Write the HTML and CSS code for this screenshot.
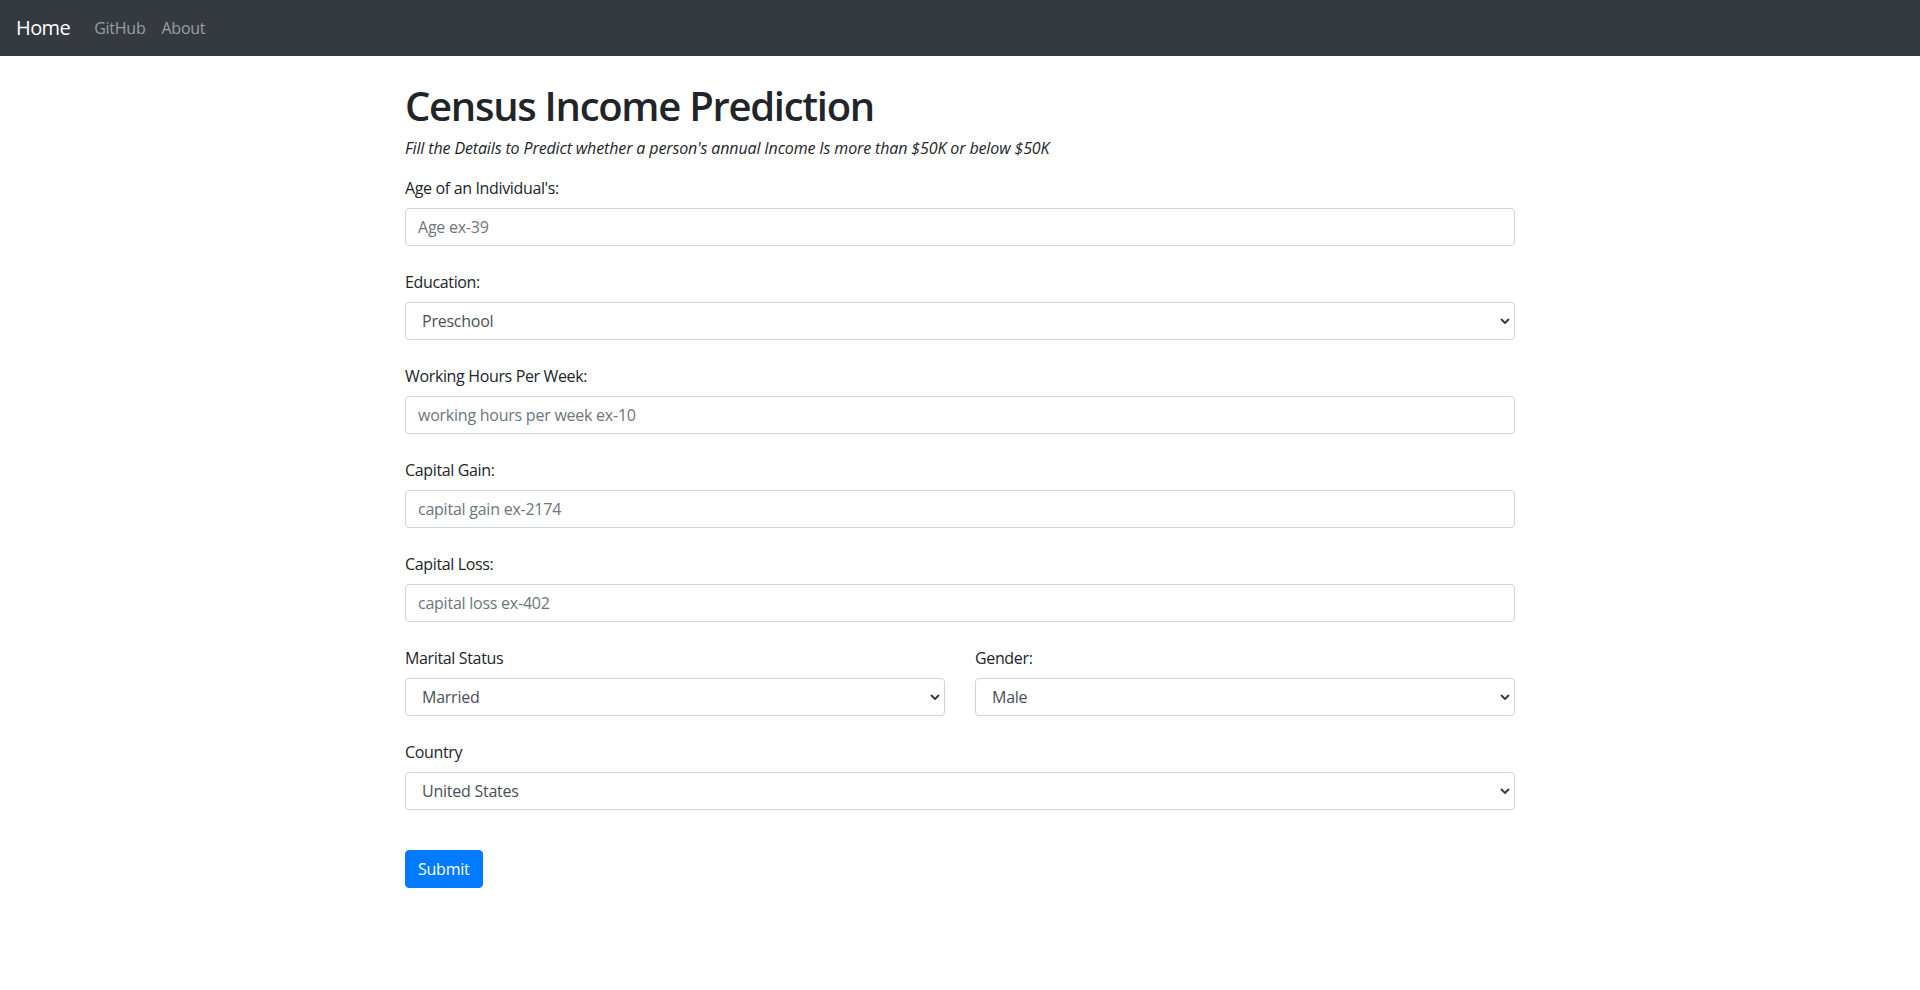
FILE: index.html
```html
<!DOCTYPE html>
<html lang="en">
<head>
<meta charset="utf-8">
<title>Census Income Prediction</title>
<link rel="stylesheet" href="styles.css">
</head>
<body>
<nav class="navbar">
  <a class="brand" href="#">Home</a>
  <ul class="nav-links">
    <li><a href="#">GitHub</a></li>
    <li><a href="#">About</a></li>
  </ul>
</nav>
<main class="container">
  <h1 class="title">Census Income Prediction</h1>
  <p class="subtitle"><i>Fill the Details to Predict whether a person's annual Income Is more than $50K or below $50K</i></p>
  <form class="form">
    <div class="group">
      <label class="label" for="age">Age of an Individual's:</label>
      <input class="control" id="age" type="text" placeholder="Age ex-39">
    </div>
    <div class="group">
      <label class="label" for="edu">Education:</label>
      <div class="select-wrap">
        <select class="control select" id="edu">
          <option>Preschool</option>
          <option>1st-4th</option>
          <option>5th-6th</option>
          <option>7th-8th</option>
          <option>9th</option>
          <option>10th</option>
          <option>11th</option>
          <option>12th</option>
          <option>HS-grad</option>
          <option>Some-college</option>
          <option>Assoc-voc</option>
          <option>Assoc-acdm</option>
          <option>Bachelors</option>
          <option>Masters</option>
          <option>Prof-school</option>
          <option>Doctorate</option>
        </select>
        <svg class="chev" viewBox="0 0 10 6" width="10" height="6"><path d="M1 1l4 4 4-4" fill="none" stroke="#3a3a3a" stroke-width="1.9"/></svg>
      </div>
    </div>
    <div class="group">
      <label class="label" for="hours">Working Hours Per Week:</label>
      <input class="control" id="hours" type="text" placeholder="working hours per week ex-10">
    </div>
    <div class="group">
      <label class="label" for="gain">Capital Gain:</label>
      <input class="control" id="gain" type="text" placeholder="capital gain ex-2174">
    </div>
    <div class="group">
      <label class="label" for="loss">Capital Loss:</label>
      <input class="control" id="loss" type="text" placeholder="capital loss ex-402">
    </div>
    <div class="row">
      <div class="group">
        <label class="label" for="marital">Marital Status</label>
        <div class="select-wrap">
          <select class="control select" id="marital">
            <option>Married</option>
            <option>Never-married</option>
            <option>Divorced</option>
            <option>Separated</option>
            <option>Widowed</option>
          </select>
          <svg class="chev" viewBox="0 0 10 6" width="10" height="6"><path d="M1 1l4 4 4-4" fill="none" stroke="#3a3a3a" stroke-width="1.9"/></svg>
        </div>
      </div>
      <div class="group">
        <label class="label" for="gender">Gender:</label>
        <div class="select-wrap">
          <select class="control select" id="gender">
            <option>Male</option>
            <option>Female</option>
          </select>
          <svg class="chev" viewBox="0 0 10 6" width="10" height="6"><path d="M1 1l4 4 4-4" fill="none" stroke="#3a3a3a" stroke-width="1.9"/></svg>
        </div>
      </div>
    </div>
    <div class="group group-last">
      <label class="label" for="country">Country</label>
      <div class="select-wrap">
        <select class="control select" id="country">
          <option>United States</option>
          <option>Mexico</option>
          <option>Philippines</option>
          <option>Germany</option>
          <option>Canada</option>
          <option>India</option>
          <option>Other</option>
        </select>
        <svg class="chev" viewBox="0 0 10 6" width="10" height="6"><path d="M1 1l4 4 4-4" fill="none" stroke="#3a3a3a" stroke-width="1.9"/></svg>
      </div>
    </div>
    <button class="btn" type="submit">Submit</button>
  </form>
</main>
</body>
</html>
```

FILE: styles.css
```css
* { box-sizing: border-box; }

html, body {
  margin: 0;
  padding: 0;
  background: #fff;
}

body {
  font-family: "Open Sans", "Noto Sans", "Liberation Sans", sans-serif;
  font-size: 16px;
  line-height: 1.5;
  letter-spacing: -0.015em;
  color: #212529;
}

.navbar {
  height: 56px;
  background: #343a40;
  display: flex;
  align-items: center;
  padding: 8px 16px;
}

.brand {
  color: #fff;
  font-size: 20px;
  line-height: 30px;
  padding: 5px 0;
  margin-right: 16px;
  text-decoration: none;
  letter-spacing: -0.03em;
}

.nav-links {
  list-style: none;
  margin: 0;
  padding: 0;
  display: flex;
}

.nav-links a {
  display: block;
  padding: 8px;
  color: rgba(255, 255, 255, 0.5);
  text-decoration: none;
  line-height: 24px;
}

.container {
  max-width: 1140px;
  margin: 24px auto 0;
  padding: 0 15px;
}

.title {
  margin: 0 0 6px;
  padding-top: 2px;
  font-size: 40px;
  font-weight: 600;
  line-height: 1.2;
  letter-spacing: -0.032em;
}

.subtitle {
  margin: 0 0 16px;
  letter-spacing: -0.008em;
}

.group {
  margin-bottom: 24px;
}

.group-last {
  margin-bottom: 40px;
}

.label {
  display: inline-block;
  margin-bottom: 8px;
  letter-spacing: -0.022em;
}

.control {
  display: block;
  width: 100%;
  height: 38px;
  padding: 6px 12px;
  font-family: inherit;
  font-size: 16px;
  line-height: 1.5;
  letter-spacing: -0.015em;
  color: #495057;
  background: #fff;
  border: 1px solid #ced4da;
  border-radius: 4px;
  outline: none;
}

.control::placeholder {
  color: #6c757d;
  opacity: 1;
}

.select-wrap {
  position: relative;
}

.select {
  appearance: none;
  -webkit-appearance: none;
  padding-left: 16px;
  padding-right: 28px;
}

.chev {
  position: absolute;
  right: 5px;
  top: 16px;
  pointer-events: none;
}

.row {
  display: grid;
  grid-template-columns: 1fr 1fr;
  column-gap: 30px;
}

.btn {
  display: inline-block;
  height: 38px;
  padding: 6px 12px;
  font-family: inherit;
  font-size: 16px;
  line-height: 1.5;
  letter-spacing: -0.015em;
  color: #fff;
  background: #007bff;
  border: 1px solid #007bff;
  border-radius: 4px;
  cursor: pointer;
}
```
